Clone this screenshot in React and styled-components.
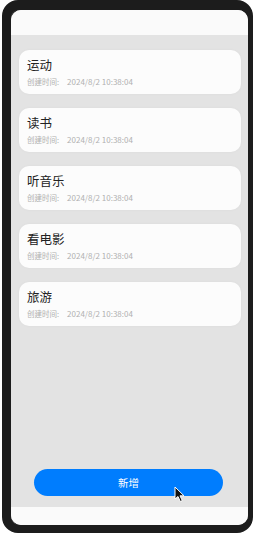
import styled, { createGlobalStyle } from "styled-components"

const items = ["运动", "读书", "听音乐", "看电影", "旅游"]

function Cursor() {
    return (
        <CursorBox>
            <svg width="12" height="17" viewBox="0 0 12 17">
                <path d="M1 1 L1 13 L4 10.5 L6.3 15.5 L8.3 14.6 L6 9.8 L10 9.8 Z" fill="#111" stroke="#fff" strokeWidth="1" strokeLinejoin="round" />
            </svg>
        </CursorBox>
    )
}

export default function App() {
    return (
        <>
            <GlobalStyle />
            <Phone>
                <Screen>
                    <TopBar />
                    <List>
                        {items.map(name => (
                            <Card key={name}>
                                <Title>{name}</Title>
                                <Sub>创建时间:<Time>2024/8/2 10:38:04</Time></Sub>
                            </Card>
                        ))}
                    </List>
                    <ButtonArea>
                        <AddButton>新增</AddButton>
                        <Cursor />
                    </ButtonArea>
                    <BottomBar />
                </Screen>
            </Phone>
        </>
    )
}

const GlobalStyle = createGlobalStyle`
body{
    margin: 0;
    background: #ffffff;
    font-family: "Noto Sans CJK SC", "Noto Sans", sans-serif;
}
`

const Phone = styled.div`
box-sizing: border-box;
width: 251px;
height: 533px;
margin-left: 2px;
border-style: solid;
border-color: #1c1c1c;
border-width: 10px 5px 8px 9px;
border-radius: 16px;
background: #1c1c1c;
box-shadow: inset 1px 0 0 #444;
`
const Screen = styled.div`
height: 100%;
border-radius: 10px;
overflow: hidden;
background: #e3e3e3;
display: flex;
flex-direction: column;
`
const TopBar = styled.div`
height: 25px;
background: #fafafa;
flex-shrink: 0;
`
const List = styled.div`
display: flex;
flex-direction: column;
gap: 14px;
padding: 15px 7px 0 8px;
`
const Card = styled.div`
height: 44px;
box-sizing: border-box;
background: #fcfcfc;
border-radius: 10px;
padding: 6px 8px 0;
box-shadow: 0 0 3px rgba(0,0,0,0.04);
`
const Title = styled.div`
font-size: 12.5px;
line-height: 18px;
color: #222;
`
const Sub = styled.div`
margin-top: 3px;
font-size: 7.5px;
line-height: 10px;
color: #b0b0b0;
`
const Time = styled.span`
margin-left: 8px;
font-size: 8px;
`
const ButtonArea = styled.div`
margin-top: auto;
position: relative;
display: flex;
padding: 0 0 11px 23px;
`
const AddButton = styled.div`
width: 189px;
height: 27px;
border-radius: 14px;
background: #007dfe;
color: #fff;
font-size: 10.5px;
display: flex;
align-items: center;
justify-content: center;
`
const CursorBox = styled.div`
position: absolute;
left: 163px;
top: 15px;
`
const BottomBar = styled.div`
height: 18px;
background: #fafafa;
flex-shrink: 0;
`
